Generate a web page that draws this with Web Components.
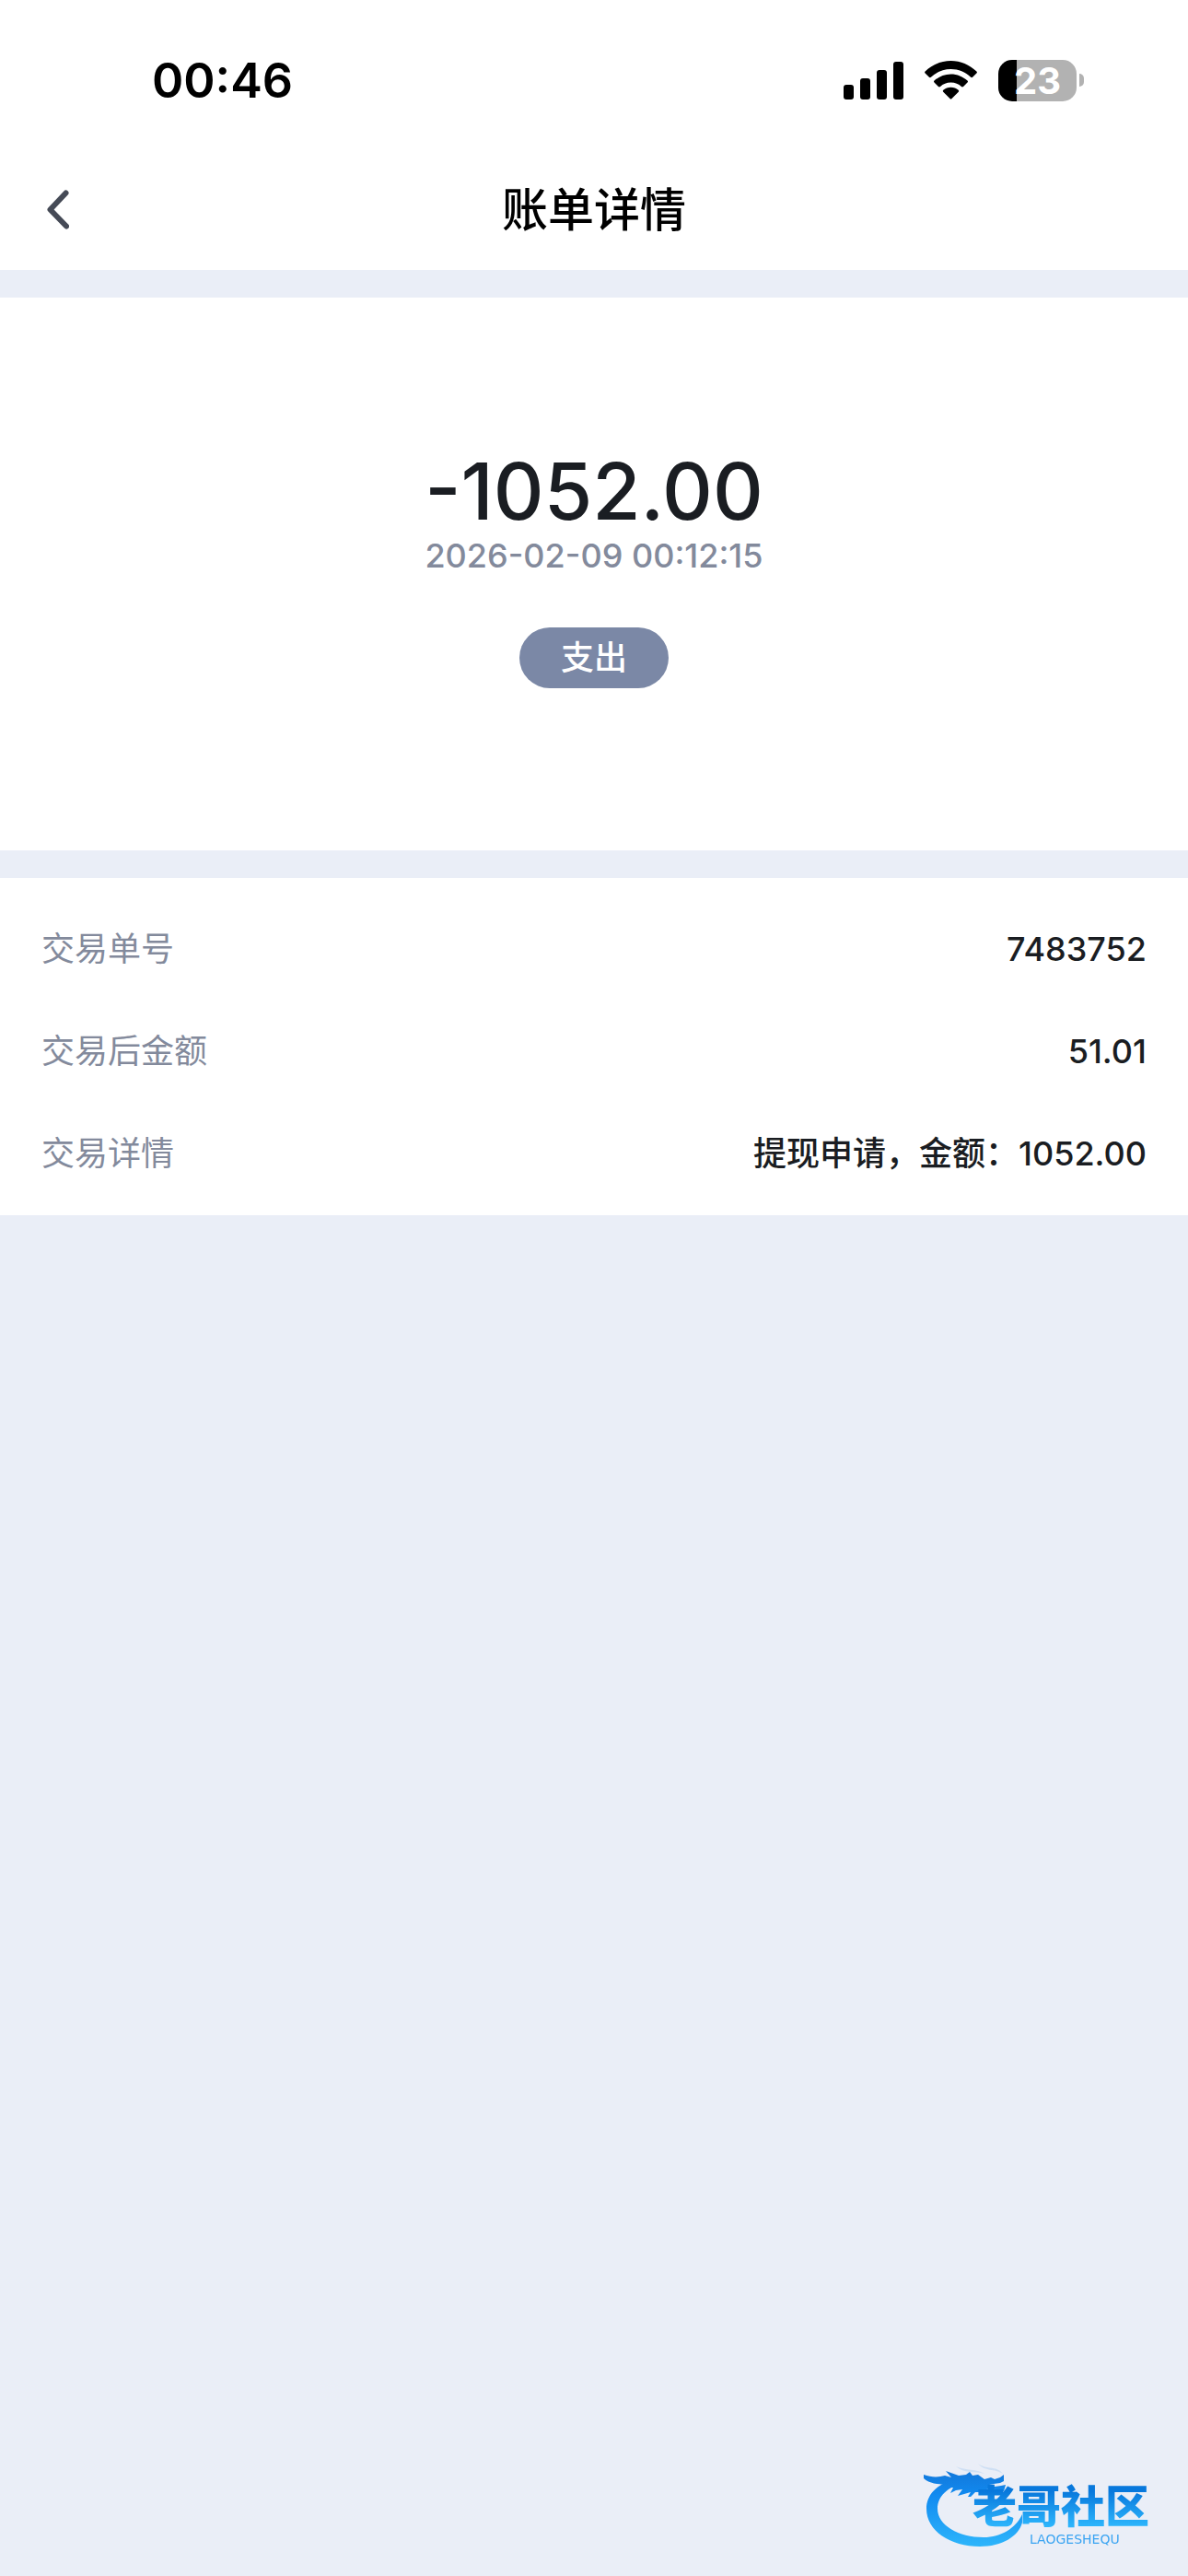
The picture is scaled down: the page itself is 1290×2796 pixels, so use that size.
<!DOCTYPE html>
<html lang="zh-CN">
<head>
<meta charset="utf-8">
<meta name="viewport" content="width=device-width, initial-scale=1">
<title>账单详情</title>
<style>
  body {
    margin: 0;
    min-height: 100vh;
    background: #eaeef7;
    color: #1a1d22;
    font: 500 36px/48px Inter, "Noto Sans CJK SC", sans-serif;
  }
</style>
</head>
<body>
<bill-page>
  <status-bar slot="top" time="00:46" battery="23"></status-bar>
  <nav-bar slot="top">账单详情</nav-bar>
  <bill-summary>
    <span slot="amount">-1052.00</span>
    <time slot="date" datetime="2026-02-09T00:12:15">2026-02-09 00:12:15</time>
    <span slot="type">支出</span>
  </bill-summary>
  <detail-list>
    <detail-row label="交易单号">7483752</detail-row>
    <detail-row label="交易后金额">51.01</detail-row>
    <detail-row label="交易详情">提现申请，金额：1052.00</detail-row>
  </detail-list>
</bill-page>
<community-logo></community-logo>

<script>
  class BaseElement extends HTMLElement {
    constructor() {
      super();
      this.attachShadow({ mode: 'open' });
    }
    connectedCallback() {
      this.shadowRoot.innerHTML = this.render();
    }
  }

  customElements.define('bill-page', class extends BaseElement {
    render() {
      return `
        <style>
          :host { display: block; }
          main { display: flex; flex-direction: column; gap: 30px; padding-top: 30px; }
        </style>
        <header><slot name="top"></slot></header>
        <main><slot></slot></main>
      `;
    }
  });

  customElements.define('status-bar', class extends BaseElement {
    render() {
      const level = this.getAttribute('battery');
      return `
        <style>
          :host {
            display: flex;
            align-items: center;
            justify-content: space-between;
            box-sizing: border-box;
            height: 162px;
            padding: 12px 113px 0 165px;
            background: #fff;
            color: #000;
          }
          .time { padding-top: 2px; font-size: 52px; font-weight: 600; }
          .icons { display: flex; align-items: center; gap: 23px; }
          svg { display: block; }
          .battery { display: flex; align-items: center; gap: 3px; }
          .body {
            width: 85px;
            border-radius: 15px;
            background: linear-gradient(90deg, #000 ${level}%, #b2b2b2 ${level}%);
            color: #fff;
            font-size: 40px;
            font-weight: 700;
            line-height: 45px;
            text-align: center;
          }
          .cap { width: 5px; height: 14px; border-radius: 0 7px 7px 0; background: #b2b2b2; }
        </style>
        <span class="time">${this.getAttribute('time')}</span>
        <div class="icons">
          <svg width="65" height="41" viewBox="0 0 65 41" aria-hidden="true">
            <rect x="0" y="25" width="11" height="16" rx="3"/>
            <rect x="18" y="18" width="11" height="23" rx="3"/>
            <rect x="36" y="9" width="11" height="32" rx="3"/>
            <rect x="54" y="0" width="11" height="41" rx="3"/>
          </svg>
          <svg width="57" height="42" viewBox="0 0 57 42" aria-hidden="true">
            <path d="M.6 11.6C8.2 4.3 18 0 28.500 0s20.300 4.300 27.900 11.600q1 1 0 2l-4.300 4.200q-1 .9-2 0C44.300 12.300 36.800 9 28.500 9S12.700 12.300 6.900 17.800q-1 .9-2 0L.6 13.600q-1-1 0-2z"/>
            <path d="M10.500 21.600C15.300 17.100 21.600 14.400 28.500 14.400s13.200 2.700 18 7.200q1 1 0 2l-4.500 4.400q-1 .9-2 0C37 25.200 33 23.500 28.500 23.500S20 25.200 17 28q-1 .9-2 0l-4.500-4.400q-1-1 0-2z"/>
            <path d="M20.300 31.700C22.500 29.800 25.400 28.700 28.500 28.700s6 1.100 8.200 3q1.100 1 .1 2l-7.300 7.300q-1 1-2 0l-7.300-7.300q-1-1 .1-2z"/>
          </svg>
          <div class="battery"><div class="body">${level}</div><div class="cap"></div></div>
        </div>
      `;
    }
  });

  customElements.define('nav-bar', class extends BaseElement {
    render() {
      return `
        <style>
          :host {
            display: grid;
            grid-template-columns: 131px 1fr 131px;
            align-items: center;
            height: 131px;
            background: #fff;
            color: #000;
          }
          button {
            display: flex;
            align-items: center;
            height: 100%;
            padding: 0 0 0 51px;
            border: 0;
            background: none;
          }
          h1 { margin: 0; font-size: 50px; font-weight: 500; line-height: 72px; text-align: center; }
        </style>
        <button type="button" aria-label="返回">
          <svg width="24" height="43" viewBox="0 0 24 43" fill="none" stroke="#454a56" stroke-width="6" stroke-linecap="round" stroke-linejoin="round" aria-hidden="true">
            <path d="M20.500 3.500 3.500 21.500l17.500 18"/>
          </svg>
        </button>
        <h1><slot></slot></h1>
      `;
    }
  });

  customElements.define('bill-summary', class extends BaseElement {
    render() {
      return `
        <style>
          :host {
            display: flex;
            flex-direction: column;
            align-items: center;
            padding: 166px 48px 176px;
            background: #fff;
          }
          .amount { font-size: 85px; line-height: 90px; }
          .date { color: #838a9c; }
          .type {
            margin-top: 54px;
            padding: 0 45px;
            border-radius: 33px;
            background: #7b88a6;
            color: #fff;
            line-height: 66px;
          }
        </style>
        <div class="amount"><slot name="amount"></slot></div>
        <div class="date"><slot name="date"></slot></div>
        <div class="type"><slot name="type"></slot></div>
      `;
    }
  });

  customElements.define('detail-list', class extends BaseElement {
    render() {
      return `
        <style>
          :host { display: block; padding: 21px 45px 12px; background: #fff; }
        </style>
        <slot></slot>
      `;
    }
  });

  customElements.define('detail-row', class extends BaseElement {
    render() {
      return `
        <style>
          :host {
            display: flex;
            align-items: center;
            justify-content: space-between;
            gap: 48px;
            min-height: 111px;
          }
          .label { color: #838a9c; font-weight: 400; }
          .value { text-align: right; }
        </style>
        <span class="label">${this.getAttribute('label')}</span>
        <span class="value"><slot></slot></span>
      `;
    }
  });

  // floating badge over the bottom corner of the page
  customElements.define('community-logo', class extends BaseElement {
    render() {
      return `
        <style>
          :host { display: block; position: fixed; right: 0; bottom: 0; }
          svg { display: block; }
          .name { font: 900 48px "Noto Sans CJK SC", sans-serif; }
          .latin { font: 400 14px "DejaVu Sans", sans-serif; }
        </style>
        <svg width="300" height="126" viewBox="0 0 300 126" role="img" aria-label="老哥社区">
          <defs>
            <linearGradient id="ring" gradientUnits="userSpaceOnUse" x1="0" y1="14" x2="0" y2="94">
              <stop offset="0" stop-color="#1279dc"/>
              <stop offset=".3" stop-color="#118af0"/>
              <stop offset="1" stop-color="#2db5fb"/>
            </linearGradient>
            <linearGradient id="word" gradientUnits="userSpaceOnUse" x1="0" y1="34" x2="0" y2="72">
              <stop offset="0" stop-color="#0878dc"/>
              <stop offset="1" stop-color="#2cb5fc"/>
            </linearGradient>
          </defs>
          <g fill="url(#ring)">
            <path d="M48 21C27 26 16 38 16 53c0 24 26 41 58 41 24 0 42-11 46-26l0-9c-7 15-23 25-42 25-27 0-50-13-50-31 0-14 11-23 29-29z"/>
            <path d="M13 16c8 3 16 3 23 1l7 2-6-7 14 5 8-1 4-3 3 4 6-1 7 5 7-2 4 2 6-2 4-3v7l-4 2-7 1-5 1 6 2 7-1 5-1-2 7-7-1-5-2-7 1-6 3-6 0-5 5-3 0 3-5-7 2-7 2 5-7-7 1-6 3 3-6-6 0-5 2 2-5c-7-1-17-1-23-7z"/>
            <path d="M48 7c11 5 22 2 31 8-11-3-22 0-31-8zM72 4c9 7 21 2 27 11-9-6-20-2-27-11z" opacity=".12"/>
          </g>
          <text class="name" x="66" y="68" fill="url(#word)">老哥社区</text>
          <text class="latin" x="128" y="91" fill="#3aa4f2">LAOGESHEQU</text>
        </svg>
      `;
    }
  });
</script>
</body>
</html>
